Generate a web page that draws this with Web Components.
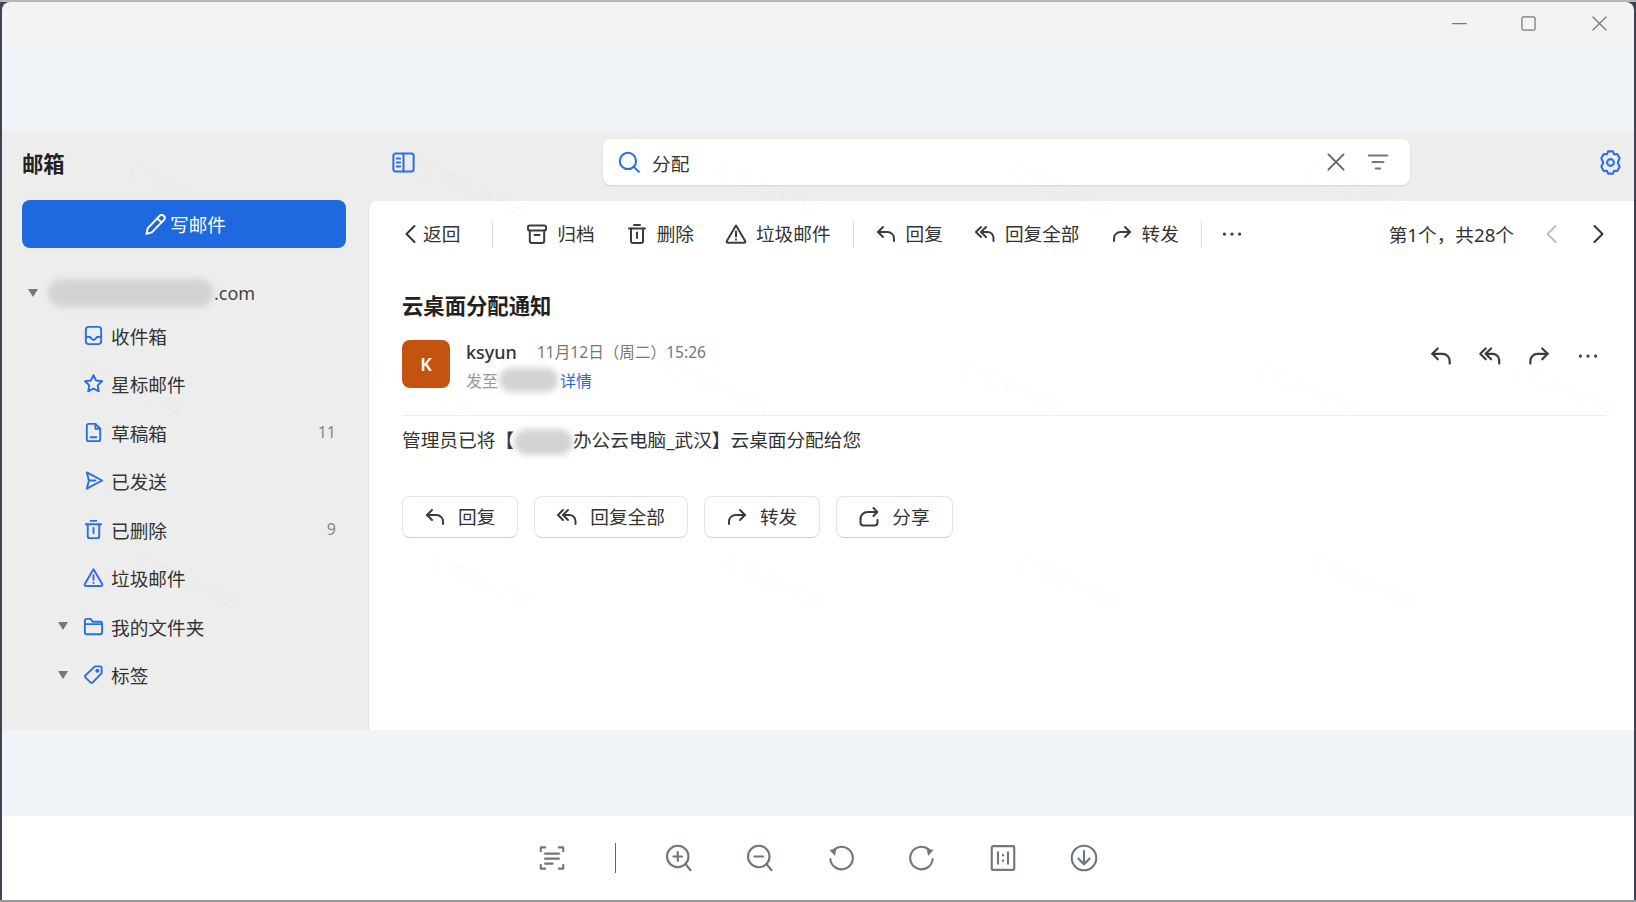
<!DOCTYPE html>
<html lang="zh-CN">
<head>
<meta charset="utf-8">
<title>邮箱</title>
<style>
html, body { margin: 0; height: 100%; }
body {
  height: 902px;
  overflow: hidden;
  box-sizing: border-box;
  padding: 2px;
  position: relative;
  background: linear-gradient(#b6b6b6 2px, #3d4454 2px, #3d4454 900px, #9a9a9a 900px);
  font-family: "Noto Sans", "Noto Sans CJK SC", sans-serif;
  color: #333;
}
</style>
</head>
<body>
<app-window>
  <title-bar slot="title"></title-bar>
  <mail-sidebar></mail-sidebar>
  <mail-main>
    <mail-toolbar></mail-toolbar>
    <mail-message></mail-message>
  </mail-main>
  <viewer-tools slot="tools"></viewer-tools>
</app-window>
<watermark-layer></watermark-layer>

<script>
const ICONS = {
  pencil: `<path d="M15.6 4.4a2.6 2.6 0 0 1 3.9 3.5L8.7 19 4 20.4l1-4.9z"/><path d="M13.6 6.6l3.8 3.5"/>`,
  inbox: `<rect x="4" y="3" width="16" height="18" rx="3"/><path d="M4 13.5h4.5c1 2 2.2 3 3.5 3s2.5-1 3.5-3H20"/>`,
  star: `<path d="M12 3.2l2.7 5.7 6.2.8-4.5 4.3 1.100 6.2L12 17.200l-5.500 3 1.100-6.200-4.500-4.300 6.200-.8z"/>`,
  draft: `<path d="M14 3H7a2 2 0 0 0-2 2v14a2 2 0 0 0 2 2h10a2 2 0 0 0 2-2V8z"/><path d="M14 3v5h5"/><path d="M9 17h6"/>`,
  send: `<path d="M5 3.5L21 12 5 20.5 7.2 12z"/><path d="M7.2 12H14"/>`,
  trash: `<path d="M4 6.5h16"/><path d="M9 3h6"/><path d="M6 6.5V19a2 2 0 0 0 2 2h8a2 2 0 0 0 2-2V6.5"/><path d="M12 10.5V16"/>`,
  warn: `<path d="M12 3.5L2.8 19a1.2 1.2 0 0 0 1 1.800h16.400a1.2 1.2 0 0 0 1-1.800z"/><path d="M12 9.5v5"/><path d="M12 17.5v.3"/>`,
  folder: `<path d="M3 6a2 2 0 0 1 2-2h4l2 3h8a2 2 0 0 1 2 2v9a2 2 0 0 1-2 2H5a2 2 0 0 1-2-2z"/><path d="M3 9.5h18"/>`,
  tag: `<path d="M13.5 3.5H19a1.500 1.500 0 0 1 1.500 1.500v5.500L11 20.500a1.500 1.500 0 0 1-2 0L3.500 15a1.500 1.500 0 0 1 0-2z"/><circle cx="16" cy="8" r="1.1"/>`,
  panel: `<rect x="3" y="4" width="18" height="16" rx="2"/><path d="M12 4v16"/><path d="M6 8.500h3"/><path d="M6 12h3"/><path d="M6 15.500h3"/>`,
  search: `<circle cx="10.5" cy="10.5" r="7.8"/><path d="M16.200 16.200L21 21"/>`,
  gear: `<path d="M10 2.800h4l1 2.400 2.600-.3 2 3.500L18 12l1.600 3.600-2 3.500-2.600-.3-1 2.400h-4l-1-2.400-2.600.3-2-3.500L6 12 4.400 8.400l2-3.500 2.600.3z"/><circle cx="12" cy="12" r="2.8"/>`,
  close: `<path d="M5 5l14 14"/><path d="M19 5L5 19"/>`,
  filter: `<path d="M3.5 6h17"/><path d="M7 12h10"/><path d="M10 18h4"/>`,
  reply: `<path d="M9 5l-5 5 5 5"/><path d="M4 10h9.500a6.500 6.500 0 0 1 6.500 6.500V19"/>`,
  replyall: `<path d="M8 5l-5 5 5 5"/><path d="M13 5l-5 5 5 5"/><path d="M8 10h6.500a6 6 0 0 1 6 6v3"/>`,
  forward: `<path d="M15 5l5 5-5 5"/><path d="M20 10h-9.500A6.500 6.500 0 0 0 4 16.500V19"/>`,
  share: `<path d="M3.5 14v3.500a3 3 0 0 0 3 3h11a3 3 0 0 0 3-3V15"/><path d="M3.500 14a7 7 0 0 1 7-7H20"/><path d="M16.500 3l3.800 4-3.800 4"/>`,
  dots: `<circle cx="5" cy="12" r="1.500" fill="currentColor" stroke="none"/><circle cx="12" cy="12" r="1.500" fill="currentColor" stroke="none"/><circle cx="19" cy="12" r="1.500" fill="currentColor" stroke="none"/>`,
  left: `<path d="M15.5 4l-8 8 8 8"/>`,
  right: `<path d="M8.5 4l8 8-8 8"/>`,
  archive: `<rect x="3" y="3.5" width="18" height="5" rx="1.5"/><path d="M4.800 8.500V19a2 2 0 0 0 2 2h10.400a2 2 0 0 0 2-2V8.500"/><path d="M9.500 13h5"/>`,
  scan: `<path d="M3 6.5v-3h3.500"/><path d="M17.500 3.500H21v3"/><path d="M21 17.500v3h-3.500"/><path d="M6.500 20.500H3v-3"/><path d="M6.500 8.500h11"/><path d="M6.500 12.500h11"/><path d="M6.500 16.500h6"/>`,
  zoomin: `<circle cx="11" cy="10.8" r="8.6"/><path d="M17.200 16.800l4 5"/><path d="M7.500 10.800h7"/><path d="M11 7.300v7"/>`,
  zoomout: `<circle cx="11" cy="10.8" r="8.6"/><path d="M17.200 16.800l4 5"/><path d="M7.500 10.800h7"/>`,
  rotl: `<path d="M6.500 5.300A9 9 0 1 1 3.500 13"/><path d="M2.800 5.500l5.400-1.200-1 6z" fill="currentColor" stroke="none"/>`,
  rotr: `<path d="M17.500 5.300A9 9 0 1 0 20.500 13"/><path d="M21.200 5.500l-5.400-1.200 1 6z" fill="currentColor" stroke="none"/>`,
  actual: `<rect x="3" y="2.5" width="18" height="19" rx="1"/><path d="M8 7.500v9"/><path d="M16 7.500v9"/><path d="M12 9.500v.4"/><path d="M12 14v.4"/>`,
  download: `<circle cx="12" cy="12" r="9.8"/><path d="M12 6.500V17"/><path d="M7.500 12.500L12 17l4.500-4.500"/>`,
  winmin: `<path d="M1 12h22"/>`,
  winmax: `<rect x="1.5" y="1.5" width="21" height="21" rx="2.5"/>`,
  winclose: `<path d="M1.500 1.500l21 21"/><path d="M22.500 1.500l-21 21"/>`,
};

class AppIcon extends HTMLElement {
  connectedCallback() {
    const size = this.getAttribute("size") || 20;
    const stroke = this.getAttribute("stroke") || 2;
    const shadow = this.attachShadow({ mode: "open" });
    shadow.innerHTML = `
      <style>
        :host { display: inline-flex; flex: none; width: ${size}px; height: ${size}px; }
        svg { width: 100%; height: 100%; display: block; fill: none; stroke: currentColor; stroke-width: ${stroke}; stroke-linecap: round; stroke-linejoin: round; }
      </style>
      <svg viewBox="0 0 24 24">${ICONS[this.getAttribute("name")] || ""}</svg>`;
  }
}
customElements.define("app-icon", AppIcon);

// the grey smudges that hide names in the original
class BlurBlob extends HTMLElement {
  connectedCallback() {
    const w = this.getAttribute("w") || 60;
    const h = this.getAttribute("h") || 24;
    const shadow = this.attachShadow({ mode: "open" });
    shadow.innerHTML = `
      <style>
        :host { display: inline-block; width: ${w}px; height: ${h}px; vertical-align: middle; background: #d3d3d3; border-radius: ${h / 2}px; filter: blur(3px); }
      </style>`;
  }
}
customElements.define("blur-blob", BlurBlob);

const windowTpl = document.createElement("template");
windowTpl.innerHTML = `
<style>
  :host { display: grid; grid-template-rows: 43px 86px 599px 86px 84px; height: 898px; border-radius: 8px 8px 0 0; overflow: hidden; }
  .band { background: #f0f4f9; }
  .app { display: grid; grid-template-columns: 366px 1fr; background: #ededed; min-height: 0; }
</style>
<slot name="title"></slot>
<div class="band"></div>
<div class="app"><slot></slot></div>
<div class="band"></div>
<slot name="tools"></slot>`;

class AppWindow extends HTMLElement {
  constructor() {
    super();
    this.attachShadow({ mode: "open" }).appendChild(windowTpl.content.cloneNode(true));
  }
}
customElements.define("app-window", AppWindow);

class TitleBar extends HTMLElement {
  constructor() {
    super();
    this.attachShadow({ mode: "open" }).innerHTML = `
    <style>
      :host { display: flex; align-items: center; justify-content: flex-end; background: #f3f3f3; color: #777; padding-right: 27px; }
      app-icon + app-icon { margin-left: 54px; }
      app-icon:last-child { margin-left: 56px; }
    </style>
    <app-icon name="winmin" size="15" stroke="2"></app-icon>
    <app-icon name="winmax" size="15" stroke="2"></app-icon>
    <app-icon name="winclose" size="15" stroke="2"></app-icon>`;
  }
}
customElements.define("title-bar", TitleBar);

class NavItem extends HTMLElement {
  connectedCallback() {
    const count = this.getAttribute("count");
    const arrow = this.hasAttribute("arrow");
    this.attachShadow({ mode: "open" }).innerHTML = `
    <style>
      :host { display: flex; align-items: center; height: 48.5px; font-size: 18.67px; color: #333; padding-left: 80px; position: relative; }
      app-icon { color: #2a6fe4; margin-right: 6px; }
      .tri { position: absolute; left: 56px; top: 20px; width: 0; height: 0; border: 5px solid transparent; border-top: 8px solid #777; border-bottom: 0; }
      .count { margin-left: auto; margin-right: 32px; font-size: 16px; color: #7d8a86; }
    </style>
    ${arrow ? `<span class="tri"></span>` : ""}
    <app-icon name="${this.getAttribute("icon")}" size="23"></app-icon>
    <slot></slot>
    ${count ? `<span class="count">${count}</span>` : ""}`;
  }
}
customElements.define("nav-item", NavItem);

class MailSidebar extends HTMLElement {
  constructor() {
    super();
    this.attachShadow({ mode: "open" }).innerHTML = `
    <style>
      :host { display: block; padding-top: 17px; box-sizing: border-box; }
      h1 { margin: 0 0 20px 20px; font-size: 21.33px; line-height: 32px; font-weight: 700; color: #222; }
      .compose { display: flex; align-items: center; justify-content: center; gap: 1px; height: 48px; margin: 0 20px; width: 324px; box-sizing: border-box; background: #1f69e0; border-radius: 8px; color: #fff; font-size: 18.67px; }
      .compose span { padding-bottom: 2px; }
      .account { display: flex; align-items: center; height: 37px; margin-top: 26px; padding-left: 46px; font-size: 18px; color: #444; position: relative; }
      .account blur-blob { margin-right: 1px; }
      .tri { position: absolute; left: 26px; top: 15px; width: 0; height: 0; border: 5px solid transparent; border-top: 8px solid #777; border-bottom: 0; }
    </style>
    <h1>邮箱</h1>
    <div class="compose"><app-icon name="pencil" size="27" stroke="1.7"></app-icon><span>写邮件</span></div>
    <div class="account"><span class="tri"></span><blur-blob w="165" h="28"></blur-blob><span>.com</span></div>
    <nav-item icon="inbox">收件箱</nav-item>
    <nav-item icon="star">星标邮件</nav-item>
    <nav-item icon="draft" count="11">草稿箱</nav-item>
    <nav-item icon="send">已发送</nav-item>
    <nav-item icon="trash" count="9">已删除</nav-item>
    <nav-item icon="warn">垃圾邮件</nav-item>
    <nav-item icon="folder" arrow>我的文件夹</nav-item>
    <nav-item icon="tag" arrow>标签</nav-item>`;
  }
}
customElements.define("mail-sidebar", MailSidebar);

class SearchBox extends HTMLElement {
  constructor() {
    super();
    this.attachShadow({ mode: "open" }).innerHTML = `
    <style>
      :host { display: flex; align-items: center; height: 46px; background: #fff; border-radius: 8px; box-shadow: 0 1px 2px rgba(0,0,0,.12); padding: 0 19px 0 14px; box-sizing: border-box; font-size: 18.67px; color: #333; }
      .lens { color: #2a6fe4; margin-right: 10px; }
      .text { flex: 1; }
      .x { color: #666; margin-right: 16px; }
      .f { color: #777; }
    </style>
    <app-icon class="lens" name="search" size="25" stroke="2"></app-icon>
    <span class="text">分配</span>
    <app-icon class="x" name="close" size="26" stroke="1.8"></app-icon>
    <app-icon class="f" name="filter" size="26" stroke="2"></app-icon>`;
  }
}
customElements.define("search-box", SearchBox);

class MailMain extends HTMLElement {
  constructor() {
    super();
    this.attachShadow({ mode: "open" }).innerHTML = `
    <style>
      :host { display: grid; grid-template-rows: 70px 1fr; min-height: 0; }
      .top { display: grid; grid-template-columns: 235px 807px 1fr; padding-top: 8px; box-sizing: border-box; }
      .panel { color: #2a6fe4; margin: 9.5px 0 0 21.5px; }
      .gear { color: #2a6fe4; justify-self: end; margin: 8.5px 9.5px 0 0; }
      .card { background: #fff; border-radius: 8px 0 0 0; border-left: 1px solid #e4e4e4; min-height: 0; overflow: hidden; }
    </style>
    <div class="top">
      <app-icon class="panel" name="panel" size="27" stroke="1.8"></app-icon>
      <search-box></search-box>
      <app-icon class="gear" name="gear" size="29" stroke="1.7"></app-icon>
    </div>
    <div class="card"><slot></slot></div>`;
  }
}
customElements.define("mail-main", MailMain);

class ToolAction extends HTMLElement {
  connectedCallback() {
    this.attachShadow({ mode: "open" }).innerHTML = `
    <style>
      :host { display: inline-flex; align-items: center; gap: 8px; font-size: 18.67px; color: #333; }
      app-icon { color: #3c3c3c; }
      span { padding-bottom: 4px; }
    </style>
    <app-icon name="${this.getAttribute("icon")}" size="24" stroke="2"></app-icon><span><slot></slot></span>`;
  }
}
customElements.define("tool-action", ToolAction);

class MailToolbar extends HTMLElement {
  constructor() {
    super();
    this.attachShadow({ mode: "open" }).innerHTML = `
    <style>
      :host { display: flex; align-items: center; height: 66px; padding-left: 30px; font-size: 18.67px; color: #333; }
      .back { display: inline-flex; align-items: center; }
      .back span { padding-bottom: 4px; }
      .back app-icon { color: #333; }
      .sep { width: 1px; height: 27px; background: #ddd; flex: none; margin-left: 22px; }
      tool-action { margin-left: 30px; }
      .sep + tool-action { margin-left: 20px; }
      .sep.first { margin-left: 32px; }
      .sep.first + tool-action { margin-left: 32px; }
      .dots { color: #3c3c3c; margin-left: 17px; }
      .pager { margin-left: auto; padding-bottom: 1px; }
      .prev { color: #bbb; margin-left: 26px; }
      .next { color: #333; margin: 0 24px 0 22px; }
    </style>
    <span class="back"><app-icon name="left" size="24" stroke="2"></app-icon><span>返回</span></span>
    <span class="sep first"></span>
    <tool-action icon="archive">归档</tool-action>
    <tool-action icon="trash">删除</tool-action>
    <tool-action icon="warn">垃圾邮件</tool-action>
    <span class="sep"></span>
    <tool-action icon="reply">回复</tool-action>
    <tool-action icon="replyall">回复全部</tool-action>
    <tool-action icon="forward">转发</tool-action>
    <span class="sep"></span>
    <app-icon class="dots" name="dots" size="26"></app-icon>
    <span class="pager">第1个，共28个</span>
    <app-icon class="prev" name="left" size="24" stroke="1.8"></app-icon>
    <app-icon class="next" name="right" size="24" stroke="2"></app-icon>`;
  }
}
customElements.define("mail-toolbar", MailToolbar);

class ActionButton extends HTMLElement {
  connectedCallback() {
    this.attachShadow({ mode: "open" }).innerHTML = `
    <style>
      :host { display: inline-flex; align-items: center; gap: 11px; height: 42px; box-sizing: border-box; padding: 0 22px 0 20px; border: 1px solid #e4e4e4; border-bottom-color: #cfcfcf; border-radius: 8px; background: #fff; font-size: 18.67px; color: #333; }
      app-icon { color: #3c3c3c; }
      span { padding-bottom: 4px; }
    </style>
    <app-icon name="${this.getAttribute("icon")}" size="24" stroke="2"></app-icon><span><slot></slot></span>`;
  }
}
customElements.define("action-button", ActionButton);

class MailMessage extends HTMLElement {
  constructor() {
    super();
    this.attachShadow({ mode: "open" }).innerHTML = `
    <style>
      :host { display: block; padding: 24px 28px 0 33px; color: #333; }
      h2 { margin: 0 0 19px; font-size: 21.33px; line-height: 30px; font-weight: 700; color: #222; }
      .sender { display: flex; }
      .avatar { width: 48px; height: 48px; border-radius: 8px; background: #c4530f; color: #fff; display: flex; align-items: center; justify-content: center; font-size: 18px; font-weight: 600; flex: none; }
      .who { margin: 0 0 -6px 16px; display: flex; flex-direction: column; gap: 2px; }
      .line { display: flex; align-items: center; height: 26px; box-sizing: border-box; padding-bottom: 2px; }
      .name { font-size: 18px; font-weight: 500; color: #333; }
      .date { font-size: 15.6px; color: #777; margin-left: 20px; padding-bottom: 2px; }
      .to { font-size: 16px; color: #999; }
      .to blur-blob { margin: 0 2px 0 1px; }
      .more { color: #2a6be0; }
      .actions { margin-left: auto; display: flex; gap: 23px; padding: 3px 5px 0 0; color: #3c3c3c; }
      hr { border: 0; height: 1px; background: #eeeeee; margin: 27px 0 9px; }
      .body { font-size: 18.67px; line-height: 30px; color: #333; white-space: nowrap; }
      .buttons { display: flex; gap: 16px; margin-top: 41px; }
    </style>
    <h2>云桌面分配通知</h2>
    <div class="sender">
      <div class="avatar">K</div>
      <div class="who">
        <div class="line"><span class="name">ksyun</span><span class="date">11月12日（周二）15:26</span></div>
        <div class="line to">发至<blur-blob w="59" h="24"></blur-blob><span class="more">详情</span></div>
      </div>
      <div class="actions">
        <app-icon name="reply" size="26" stroke="2"></app-icon>
        <app-icon name="replyall" size="26" stroke="2"></app-icon>
        <app-icon name="forward" size="26" stroke="2"></app-icon>
        <app-icon name="dots" size="26"></app-icon>
      </div>
    </div>
    <hr>
    <div class="body">管理员已将【<blur-blob w="59" h="26"></blur-blob>办公云电脑_武汉】云桌面分配给您</div>
    <div class="buttons">
      <action-button icon="reply">回复</action-button>
      <action-button icon="replyall">回复全部</action-button>
      <action-button icon="forward">转发</action-button>
      <action-button icon="share">分享</action-button>
    </div>`;
  }
}
customElements.define("mail-message", MailMessage);

class ViewerTools extends HTMLElement {
  constructor() {
    super();
    const names = ["zoomin", "zoomout", "rotl", "rotr", "actual", "download"];
    this.attachShadow({ mode: "open" }).innerHTML = `
    <style>
      :host { display: flex; align-items: center; justify-content: center; gap: 51px; background: #fff; color: #6f7680; }
      .sep { width: 1px; height: 30px; background: #666; margin: 0 -3px; }
    </style>
    <app-icon name="scan" size="30" stroke="1.7"></app-icon>
    <span class="sep"></span>
    ${names.map((n) => `<app-icon name="${n}" size="30" stroke="1.7"></app-icon>`).join("")}`;
  }
}
customElements.define("viewer-tools", ViewerTools);

// faint rotated watermark over the whole window, big and small ones
const BIG_MARKS = [
  [178, 190], [472, 190], [766, 190], [1060, 190], [1355, 190],
  [128, 387], [422, 387], [716, 387], [1010, 387], [1304, 387], [1560, 387],
  [185, 582], [479, 582], [773, 582], [1067, 582], [1361, 582],
];
const SMALL_MARKS = [
  [97, 137], [866, 55], [1440, 75], [1165, 152], [875, 223], [420, 243], [1490, 255],
  [1210, 332], [742, 348], [125, 400], [460, 420], [1534, 437], [1067, 455], [787, 533],
  [320, 547], [1388, 558], [60, 625], [1111, 637], [643, 652], [365, 730], [967, 757],
];

class WatermarkLayer extends HTMLElement {
  constructor() {
    super();
    const mark = (list, cls) => list.map(([x, y]) => `<span class="${cls}" style="left:${x}px;top:${y}px">廖雨蝶/*174</span>`).join("");
    this.attachShadow({ mode: "open" }).innerHTML = `
    <style>
      :host { position: absolute; inset: 0; pointer-events: none; overflow: hidden; display: block; }
      span { position: absolute; white-space: nowrap; transform: translate(-50%, -50%) rotate(23deg); }
      .big { font-size: 20px; color: rgba(0,0,0,.028); }
      .small { font-size: 14.5px; color: rgba(0,0,0,.018); }
    </style>
    ${mark(BIG_MARKS, "big")}${mark(SMALL_MARKS, "small")}`;
  }
}
customElements.define("watermark-layer", WatermarkLayer);
</script>
</body>
</html>
